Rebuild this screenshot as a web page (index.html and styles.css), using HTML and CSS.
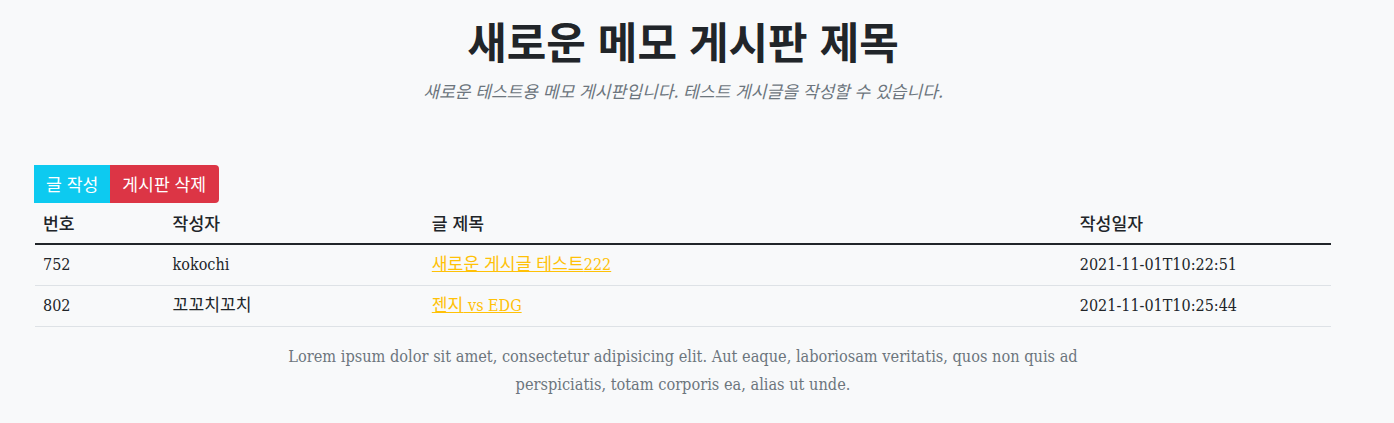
FILE: index.html
```html
<!DOCTYPE html>
<html lang="ko">
<head>
<meta charset="utf-8">
<title>새로운 메모 게시판 제목</title>
<link rel="stylesheet" href="styles.css">
</head>
<body>
<div class="container">
  <header class="board-header">
    <h1 class="board-title">새로운 메모 게시판 제목</h1>
    <p class="board-desc">새로운 테스트용 메모 게시판입니다. 테스트 게시글을 작성할 수 있습니다.</p>
  </header>
  <div class="btn-group">
    <a class="btn btn-info" href="#">글 작성</a>
    <a class="btn btn-danger" href="#">게시판 삭제</a>
  </div>
  <table class="board-table">
    <colgroup>
      <col class="c-num"><col class="c-author"><col class="c-title"><col class="c-date">
    </colgroup>
    <thead>
      <tr><th>번호</th><th>작성자</th><th>글 제목</th><th>작성일자</th></tr>
    </thead>
    <tbody>
      <tr><td>752</td><td>kokochi</td><td><a class="post-link" href="#"><span class="ko">새로운 게시글 테스트</span>222</a></td><td>2021-11-01T10:22:51</td></tr>
      <tr><td>802</td><td><span class="ko">꼬꼬치꼬치</span></td><td><a class="post-link" href="#"><span class="ko">젠지</span> vs EDG</a></td><td>2021-11-01T10:25:44</td></tr>
    </tbody>
  </table>
  <p class="lorem">Lorem ipsum dolor sit amet, consectetur adipisicing elit. Aut eaque, laboriosam veritatis, quos non quis ad<br>perspiciatis, totam corporis ea, alias ut unde.</p>
</div>
</body>
</html>
```
FILE: styles.css
```css
* { box-sizing: border-box; }
body {
  margin: 0;
  background: #f8f9fa;
  color: #212529;
  font-family: "Roboto Slab", "DejaVu Serif", "Noto Sans CJK KR", serif;
  font-stretch: semi-condensed;
  font-size: 16px;
  line-height: 1.5;
}
.container {
  width: 1296px;
  margin-left: 35px;
}
.ko {
  font-family: "Noto Sans CJK KR", sans-serif;
  font-size: 17.2px;
  line-height: 1;
}
.board-header {
  text-align: center;
  padding-top: 15px;
}
.board-title {
  margin: 0;
  font-family: "Noto Sans CJK KR", sans-serif;
  font-size: 43px;
  font-weight: 700;
  line-height: 50px;
}
.board-desc {
  margin: 14px 0 0;
  font-family: "Noto Sans CJK KR", sans-serif;
  font-size: 17.1px;
  font-style: italic;
  color: #6c757d;
  line-height: 24px;
}
.btn-group {
  display: flex;
  margin-top: 62px;
  margin-left: -1px;
}
.btn {
  display: inline-block;
  padding: 6px 12px;
  font-family: "Noto Sans CJK KR", sans-serif;
  font-size: 17.2px;
  line-height: 26px;
  height: 38px;
  color: #fff;
  text-decoration: none;
}
.btn-info { background: #0dcaf0; }
.btn-danger { background: #dc3545; border-radius: 0 4px 4px 0; padding-right: 13px; }
.board-table {
  width: 100%;
  border-collapse: collapse;
  table-layout: fixed;
  margin-bottom: 16px;
}
.c-num { width: 10%; }
.c-author { width: 20%; }
.c-title { width: 50%; }
.c-date { width: 20%; }
.board-table th, .board-table td {
  padding: 8px;
  text-align: left;
  line-height: 24px;
  height: 41px;
  border-bottom: 1px solid #dee2e6;
}
.board-table th {
  font-family: "Noto Sans CJK KR", sans-serif;
  font-size: 17.2px;
  font-weight: 500;
  height: 41px;
  border-bottom: 2px solid #212529;
}
.post-link { color: #ffc107; }
.lorem {
  margin: 0;
  text-align: center;
  color: #6c757d;
  font-size: 16.2px;
  line-height: 28px;
}
```
